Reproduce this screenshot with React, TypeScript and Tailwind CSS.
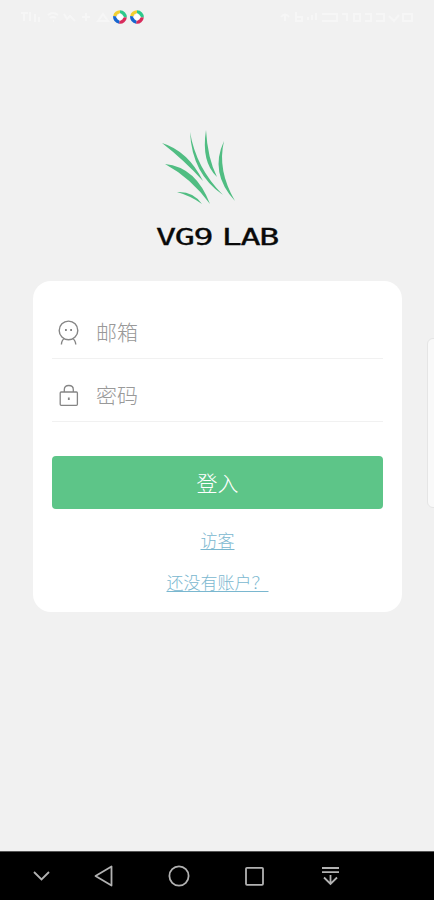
import type { ReactNode } from "react";

const cjk = "font-['Noto_Sans_CJK_SC',sans-serif]";

function Pinwheel() {
  return (
    <svg width="14" height="14" viewBox="0 0 14 14" className="shrink-0">
      <g fill="none" strokeWidth="3.4">
        <path d="M1.9 6.2A5.1 5.1 0 0 1 7 1.9" stroke="#f2cf32" />
        <path d="M7 1.9A5.1 5.1 0 0 1 12.1 7.4" stroke="#2dc98b" />
        <path d="M12.1 7.4A5.1 5.1 0 0 1 6.3 12.1" stroke="#d82b5c" />
        <path d="M6.3 12.1A5.1 5.1 0 0 1 1.9 6.2" stroke="#1765cf" />
      </g>
      <path d="M7 2.9 8.6 5.2 11.2 7 8.8 8.8 7 11.1 5.2 8.8 2.8 7 5.3 5.2Z" fill="#fff" />
    </svg>
  );
}

function StatusBar() {
  return (
    <header className="flex h-[34px] shrink-0 items-center justify-between px-[18px]">
      <div className="flex items-center gap-[3px]">
        <svg width="92" height="14" viewBox="0 0 92 14" fill="none" stroke="#f6f6f6" strokeWidth="2">
          <path d="M3 3h7M6 3v8M12 2v9M17 4v8M21 7v5M30 5q5-4 10 0M32 8q3-2 6 0M35 11h1M46 4l3 5 3-3 5 5M64 7h8M68 3v8M80 11l5-7 5 7Z" />
        </svg>
        <Pinwheel />
        <Pinwheel />
      </div>
      <svg width="136" height="14" viewBox="0 0 136 14" fill="none" stroke="#f6f6f6" strokeWidth="2">
        <path d="M1 7q4-5 8 0M5 4v7M16 2v9h6V7h-5M28 10V7M32 10V5M36 10V3M42 4h15v7H42M62 4h5v7M74 4v7h6V4ZM85 4h6v7h-6M96 4h8v7h-8M109 6l5 5 5-6M123 4h9v7h-9Z" />
      </svg>
    </header>
  );
}

function GrassLogo() {
  return (
    <svg width="76" height="76" viewBox="0 0 76 76" fill="#50bd82" className="ml-[5px]">
      <path d="M1 13Q27 21 42 51Q23 30 1 13Z" />
      <path d="M29 2Q35 38 62 65Q31 44 29 2Z" />
      <path d="M45 0Q46.5 28 56 47Q40 32 45 0Z" />
      <path d="M63 11Q56 40 74 71Q48 43 63 11Z" />
      <path d="M4 34Q35 37 49 74Q30 48 4 34Z" />
      <path d="M16 62Q32 61 41 74Q30 66 16 62Z" />
    </svg>
  );
}

function Field({ icon, label }: { icon: ReactNode; label: string }) {
  return (
    <div className="flex h-[63px] items-center border-b border-[#f1f1f1] pt-[9px] pl-[5px]">
      {icon}
      <span className={`${cjk} mb-[2px] pl-[16px] text-[21px] leading-[30px] font-light text-[#999]`}>{label}</span>
    </div>
  );
}

function NavBar() {
  return (
    <nav className="h-[49px] shrink-0 border-t border-[#555] bg-black">
      <svg width="434" height="48" viewBox="0 0 434 48" fill="none" stroke="#b2b2b2" strokeWidth="1.8">
        <path d="m34 20 7.5 7.5L49 20" />
        <path d="M95.5 24 111.5 14.5v19Z" strokeLinejoin="round" />
        <circle cx="179" cy="24" r="9.6" />
        <rect x="246" y="15.8" width="17" height="17" rx="1" />
        <path d="M322 16h17M322 20.2h17M330.5 23v9M324 25.5l6.5 6.5L337 25.5" />
      </svg>
    </nav>
  );
}

export default function App() {
  return (
    <div className="relative flex h-[900px] w-[434px] flex-col overflow-hidden bg-[#f1f1f1]">
      <StatusBar />
      <main className="flex flex-1 flex-col px-[33px] pt-[96px]">
        <div className="flex h-[151px] flex-col pl-[123px]">
          <GrassLogo />
          <h1 className="mt-[17px] w-max origin-left scale-x-[1.45] font-['DejaVu_Sans_Mono',monospace] text-[23px] leading-[28px] font-normal tracking-[-0.9px] [word-spacing:-6.5px] text-[#090909] [-webkit-text-stroke:0.3px_#090909]">
            VG9 LAB
          </h1>
        </div>
        <section className="flex h-[331px] w-[369px] flex-col rounded-[18px] bg-white px-[19px] pt-[15px]">
          <Field
            label="邮箱"
            icon={
              <svg width="23" height="28" viewBox="0 0 23 28" fill="none" stroke="#858585" strokeWidth="1.4">
                <circle cx="11.5" cy="12.4" r="9.3" />
                <path d="M7.5 20.5Q4.7 22 4.4 26.5M15.5 20.5Q18.3 22 18.8 26.5" />
                <path d="M8 12h1.8M13.2 12H15" strokeWidth="1.8" />
              </svg>
            }
          />
          <Field
            label="密码"
            icon={
              <svg width="23" height="28" viewBox="0 0 23 28" fill="none" stroke="#858585" strokeWidth="1.3">
                <rect x="3.2" y="11" width="17.2" height="13.3" rx="1" />
                <path d="M7.3 11V8.5Q7.3 4.5 11.8 4.5T16.3 8.5V11" />
                <path d="M11.8 16.5V19" strokeWidth="1.8" />
              </svg>
            }
          />
          <button className={`${cjk} mt-[34px] h-[53px] shrink-0 rounded-[4px] bg-[#5dc588] text-[21px] font-light text-white`}>
            登入
          </button>
          <a className={`${cjk} mt-[19px] self-center text-[17px] leading-[24px] font-light text-[#7ab7cf] underline decoration-1 underline-offset-[2px]`}>
            访客
          </a>
          <a className={`${cjk} mt-[18px] self-center text-[17px] leading-[24px] font-light text-[#7ab7cf] underline decoration-1 underline-offset-[2px]`}>
            还没有账户？
          </a>
        </section>
      </main>
      <NavBar />
      <aside className="absolute top-[338px] -right-[8px] h-[170px] w-[15px] rounded-[6px] border border-[#e5e5e5] bg-[#f9f9f9]" />
    </div>
  );
}
